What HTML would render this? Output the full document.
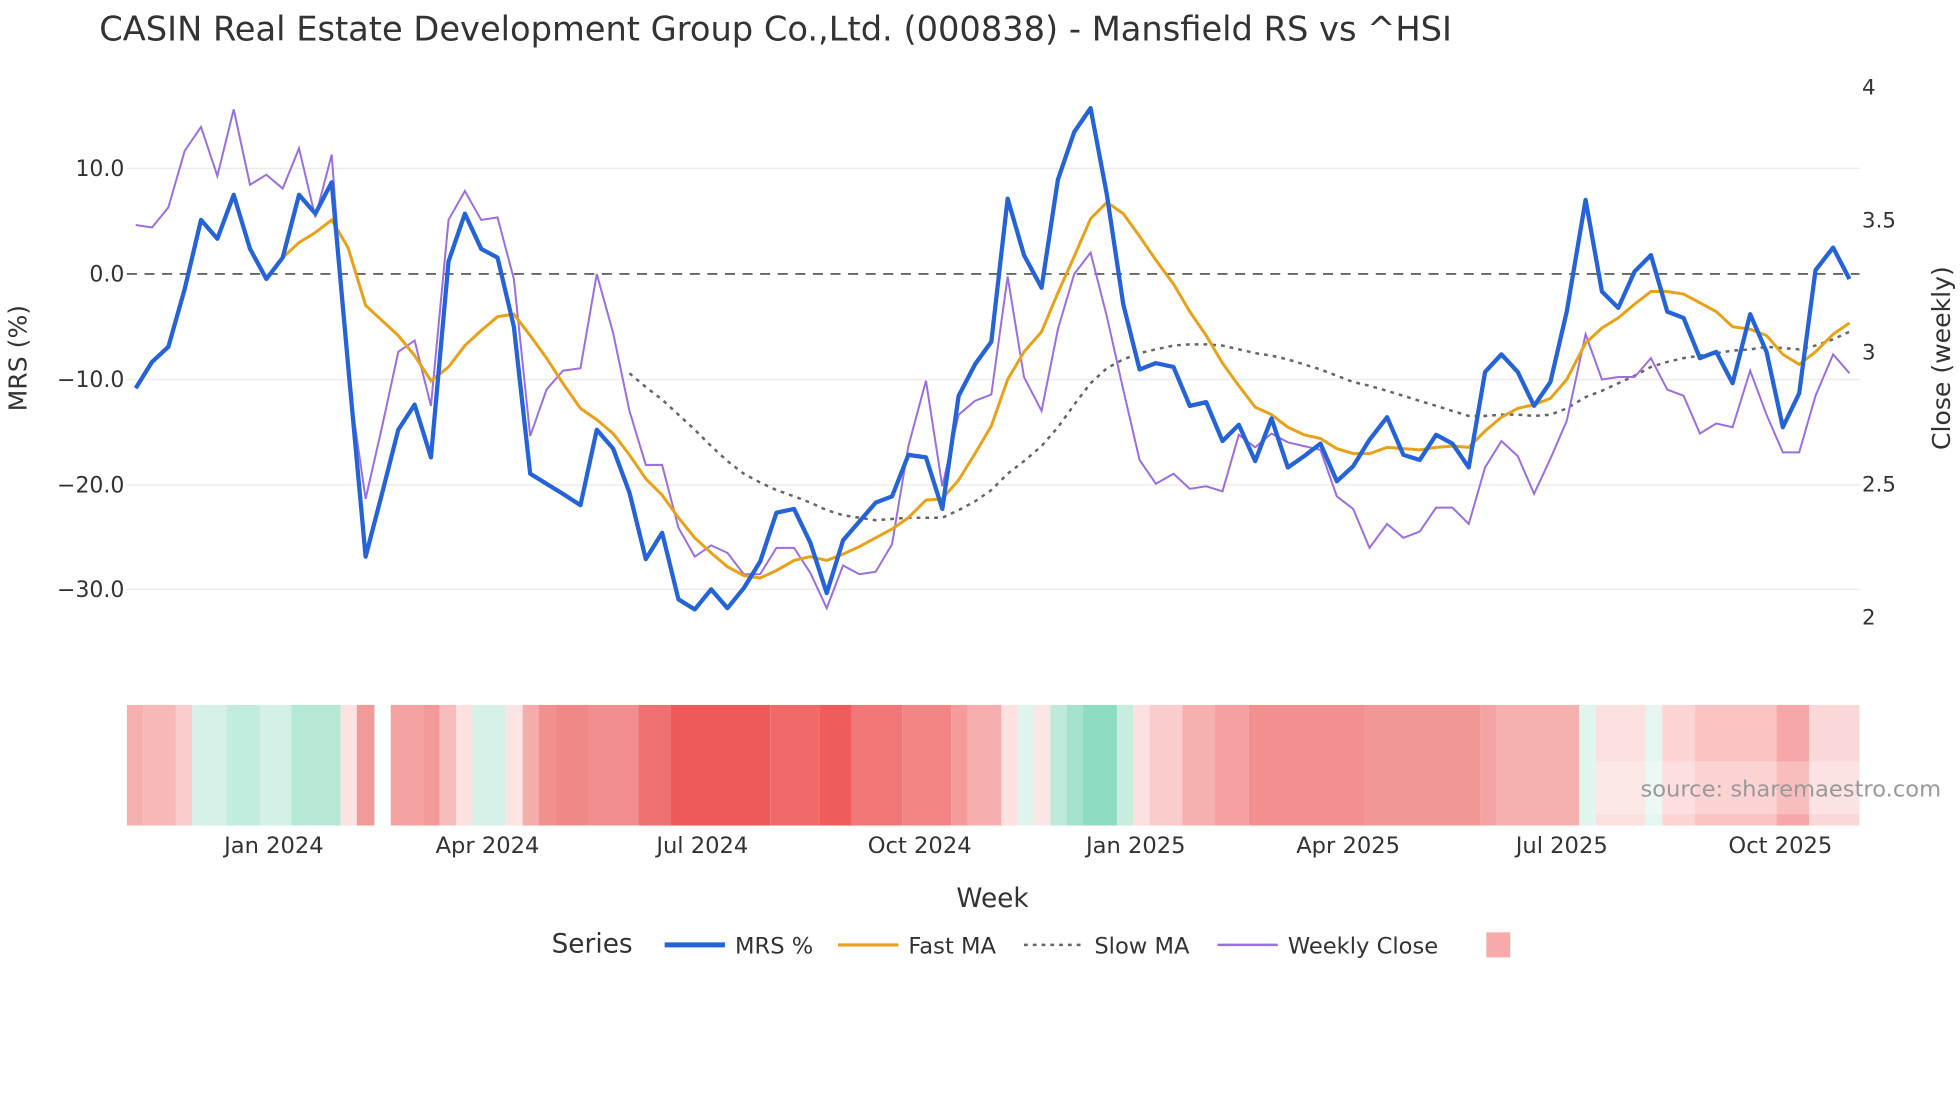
<!DOCTYPE html>
<html><head><meta charset="utf-8"><style>
html,body{margin:0;padding:0;background:#fff;}
svg{display:block;font-family:"DejaVu Sans","Liberation Sans",sans-serif;}
</style></head><body>
<svg width="1960" height="1102" viewBox="0 0 1560 877" xmlns="http://www.w3.org/2000/svg">
<rect width="1560" height="877" fill="#fff"/>
<text x="79" y="32" font-size="26.8" fill="#333">CASIN Real Estate Development Group Co.,Ltd. (000838) - Mansfield RS vs ^HSI</text>
<g stroke="#ececec" stroke-width="1.2">
<line x1="101" x2="1480" y1="134" y2="134"/>
<line x1="101" x2="1480" y1="302" y2="302"/>
<line x1="101" x2="1480" y1="386" y2="386"/>
<line x1="101" x2="1480" y1="469" y2="469"/>
</g>
<line x1="101" x2="1480" y1="218" y2="218" stroke="#666" stroke-width="1.5" stroke-dasharray="8,6"/>
<g font-size="17.5" fill="#333" text-anchor="end">
<text x="99" y="140">10.0</text>
<text x="99" y="224">0.0</text>
<text x="99" y="308">−10.0</text>
<text x="99" y="392">−20.0</text>
<text x="99" y="475">−30.0</text>
</g>
<g font-size="17" fill="#333">
<text x="1482" y="75">4</text>
<text x="1482" y="181">3.5</text>
<text x="1482" y="286">3</text>
<text x="1482" y="391">2.5</text>
<text x="1482" y="497">2</text>
</g>
<text transform="translate(21,285) rotate(-90)" font-size="20" fill="#333" text-anchor="middle">MRS (%)</text>
<text transform="translate(1552,285) rotate(-90)" font-size="20" fill="#333" text-anchor="middle">Close (weekly)</text>
<polyline fill="none" stroke="#666" stroke-width="2" stroke-dasharray="3,4" points="501,297 514,308 527,318 540,330 553,342 566,355 579,367 592,377 605,384 618,390 632,395 645,400 658,406 671,410 684,412 697,414 710,413 723,412 737,412 750,412 763,406 776,399 789,390 802,377 815,367 829,355 842,340 855,322 868,305 881,293 894,286 907,281 920,278 934,275 947,274 960,274 973,275 986,278 999,281 1012,283 1025,286 1038,290 1051,294 1064,299 1077,304 1090,307 1104,311 1117,315 1130,319 1143,323 1156,327 1169,331 1182,331 1195,330 1208,330 1221,331 1234,330 1247,325 1262,316 1275,311 1288,305 1301,299 1314,292 1327,288 1340,285 1353,283 1366,281 1379,279 1393,278 1406,276 1419,277 1432,278 1445,275 1459,270 1472,264"/>
<polyline fill="none" stroke="#9b6fe0" stroke-width="1.6" points="108,179 121,181 134,165 147,120 160,101 173,140 186,87 199,147 212,139 225,150 238,118 251,173 264,123 277,300 291,397 304,340 317,280 330,271 343,323 357,175 370,152 383,175 396,173 409,222 422,347 435,310 448,295 462,293 475,218 488,265 501,327 514,370 527,370 540,420 553,443 566,434 579,440 592,457 605,457 618,436 632,436 645,456 658,484 671,450 684,457 697,455 710,433 723,355 737,303 750,387 763,330 776,319 789,314 802,220 815,300 829,327 842,262 855,218 868,201 881,252 894,310 907,366 920,385 934,377 947,389 960,387 973,391 986,346 999,356 1012,345 1025,352 1038,355 1051,358 1064,395 1077,405 1090,436 1104,417 1117,428 1130,423 1143,404 1156,404 1169,417 1182,372 1195,351 1208,363 1221,393 1234,365 1247,335 1262,266 1275,302 1288,300 1301,300 1314,285 1327,310 1340,315 1353,345 1366,337 1379,340 1393,295 1406,330 1419,360 1432,360 1445,315 1459,282 1472,297"/>
<polyline fill="none" stroke="#e8a21a" stroke-width="2.4" points="225,205 238,193 251,185 264,175 277,197 291,243 304,255 317,267 330,283 343,303 357,292 370,275 383,263 396,252 409,250 422,267 435,285 448,305 462,325 475,334 488,345 501,362 514,381 527,394 540,412 553,428 566,440 579,451 592,458 605,460 618,454 632,446 645,443 658,446 671,441 684,435 697,428 710,421 723,412 737,398 750,397 763,382 776,361 789,339 802,302 815,280 829,264 842,233 855,204 868,174 881,161 894,170 907,188 920,207 934,226 947,248 960,267 973,289 986,307 999,324 1012,330 1025,340 1038,346 1051,349 1064,357 1077,361 1090,361 1104,356 1117,357 1130,358 1143,356 1156,355 1169,356 1182,343 1195,332 1208,325 1221,322 1234,317 1247,302 1262,273 1275,261 1288,253 1301,242 1314,232 1327,232 1340,234 1353,241 1366,248 1379,260 1393,262 1406,267 1419,282 1432,290 1445,280 1459,266 1472,257"/>
<polyline fill="none" stroke="#2563d9" stroke-width="3.4" stroke-linejoin="round" points="108,309 121,288 134,276 147,230 160,175 173,190 186,155 199,198 212,222 225,205 238,155 251,170 264,145 277,290 291,443 304,393 317,342 330,322 343,364 357,208 370,170 383,198 396,205 409,260 422,377 435,385 448,393 462,402 475,342 488,357 501,392 514,445 527,424 540,477 553,485 566,469 579,484 592,468 605,447 618,408 632,405 645,432 658,472 671,430 684,415 697,400 710,395 723,362 737,364 750,405 763,315 776,290 789,272 802,158 815,203 829,229 842,143 855,105 868,86 881,155 894,242 907,294 920,289 934,292 947,323 960,320 973,351 986,338 999,367 1012,333 1025,372 1038,363 1051,353 1064,383 1077,371 1090,350 1104,332 1117,362 1130,366 1143,346 1156,353 1169,372 1182,296 1195,282 1208,296 1221,323 1234,304 1247,248 1262,159 1275,232 1288,245 1301,216 1314,203 1327,248 1340,253 1353,285 1366,280 1379,305 1393,250 1406,280 1419,340 1432,313 1445,215 1459,197 1472,222"/>
<g>
<rect x="101" y="561" width="13" height="96" fill="#f6b0b0"/>
<rect x="114" y="561" width="26" height="96" fill="#f7b8b8"/>
<rect x="140" y="561" width="13" height="96" fill="#fbcccc"/>
<rect x="153" y="561" width="27" height="96" fill="#d6f2e8"/>
<rect x="180" y="561" width="27" height="96" fill="#c2ecdd"/>
<rect x="207" y="561" width="25" height="96" fill="#d4f1e7"/>
<rect x="232" y="561" width="39" height="96" fill="#b6e8d6"/>
<rect x="271" y="561" width="13" height="96" fill="#fde2e2"/>
<rect x="284" y="561" width="14" height="96" fill="#f09a9a"/>
<rect x="311" y="561" width="26" height="96" fill="#f4a2a2"/>
<rect x="337" y="561" width="13" height="96" fill="#f29a9a"/>
<rect x="350" y="561" width="13" height="96" fill="#f8bcbc"/>
<rect x="363" y="561" width="13" height="96" fill="#fde0e0"/>
<rect x="376" y="561" width="27" height="96" fill="#d6f2e8"/>
<rect x="403" y="561" width="13" height="96" fill="#fde4e4"/>
<rect x="416" y="561" width="13" height="96" fill="#f6acac"/>
<rect x="429" y="561" width="13" height="96" fill="#f29090"/>
<rect x="442" y="561" width="26" height="96" fill="#f08888"/>
<rect x="468" y="561" width="40" height="96" fill="#f28e8e"/>
<rect x="508" y="561" width="26" height="96" fill="#ef7070"/>
<rect x="534" y="561" width="79" height="96" fill="#ee5959"/>
<rect x="613" y="561" width="39" height="96" fill="#f06a6a"/>
<rect x="652" y="561" width="26" height="96" fill="#ee5c5c"/>
<rect x="678" y="561" width="40" height="96" fill="#f07777"/>
<rect x="718" y="561" width="39" height="96" fill="#f28484"/>
<rect x="757" y="561" width="13" height="96" fill="#f49c9c"/>
<rect x="770" y="561" width="27" height="96" fill="#f6aeae"/>
<rect x="797" y="561" width="13" height="96" fill="#fde0e0"/>
<rect x="810" y="561" width="13" height="96" fill="#def4ec"/>
<rect x="823" y="561" width="13" height="96" fill="#fbe6e6"/>
<rect x="836" y="561" width="13" height="96" fill="#bfeadb"/>
<rect x="849" y="561" width="13" height="96" fill="#a6e3ce"/>
<rect x="862" y="561" width="27" height="96" fill="#8edcc2"/>
<rect x="889" y="561" width="13" height="96" fill="#c8eddf"/>
<rect x="902" y="561" width="13" height="96" fill="#fde0e0"/>
<rect x="915" y="561" width="26" height="96" fill="#fbcccc"/>
<rect x="941" y="561" width="26" height="96" fill="#f6b0b0"/>
<rect x="967" y="561" width="27" height="96" fill="#f4a0a0"/>
<rect x="994" y="561" width="92" height="96" fill="#f29090"/>
<rect x="1086" y="561" width="92" height="96" fill="#f39696"/>
<rect x="1178" y="561" width="13" height="96" fill="#f4a4a4"/>
<rect x="1191" y="561" width="66" height="96" fill="#f6b0b0"/>
<rect x="1257" y="561" width="13" height="96" fill="#e0f5ee"/>
<rect x="1270" y="561" width="40" height="96" fill="#fde0e0"/>
<rect x="1310" y="561" width="13" height="96" fill="#e4f6ef"/>
<rect x="1323" y="561" width="26" height="96" fill="#fcd4d4"/>
<rect x="1349" y="561" width="65" height="96" fill="#fac4c4"/>
<rect x="1414" y="561" width="26" height="96" fill="#f6a8a8"/>
<rect x="1440" y="561" width="40" height="96" fill="#fbd8d8"/>
</g>
<rect x="1270" y="606" width="210" height="42" fill="#fff" opacity="0.25"/>
<text x="1545" y="634" font-size="18" fill="#999" text-anchor="end">source: sharemaestro.com</text>
<g font-size="18" fill="#333" text-anchor="middle">
<text x="218" y="679">Jan 2024</text>
<text x="388" y="679">Apr 2024</text>
<text x="559" y="679">Jul 2024</text>
<text x="732" y="679">Oct 2024</text>
<text x="904" y="679">Jan 2025</text>
<text x="1073" y="679">Apr 2025</text>
<text x="1243" y="679">Jul 2025</text>
<text x="1417" y="679">Oct 2025</text>
</g>
<text x="790" y="722" font-size="21" fill="#333" text-anchor="middle">Week</text>
<text x="439" y="758" font-size="21" fill="#333">Series</text>
<line x1="529" x2="577" y1="752" y2="752" stroke="#2563d9" stroke-width="4"/>
<text x="585" y="759" font-size="18" fill="#333">MRS %</text>
<line x1="667" x2="715" y1="752" y2="752" stroke="#e8a21a" stroke-width="2.5"/>
<text x="723" y="759" font-size="18" fill="#333">Fast MA</text>
<line x1="815" x2="863" y1="752" y2="752" stroke="#666" stroke-width="2" stroke-dasharray="3,4"/>
<text x="871" y="759" font-size="18" fill="#333">Slow MA</text>
<line x1="969" x2="1017" y1="752" y2="752" stroke="#9b6fe0" stroke-width="2"/>
<text x="1025" y="759" font-size="18" fill="#333">Weekly Close</text>
<rect x="1183" y="742" width="19" height="20" fill="#f6aaaa"/>
</svg>
</body></html>
